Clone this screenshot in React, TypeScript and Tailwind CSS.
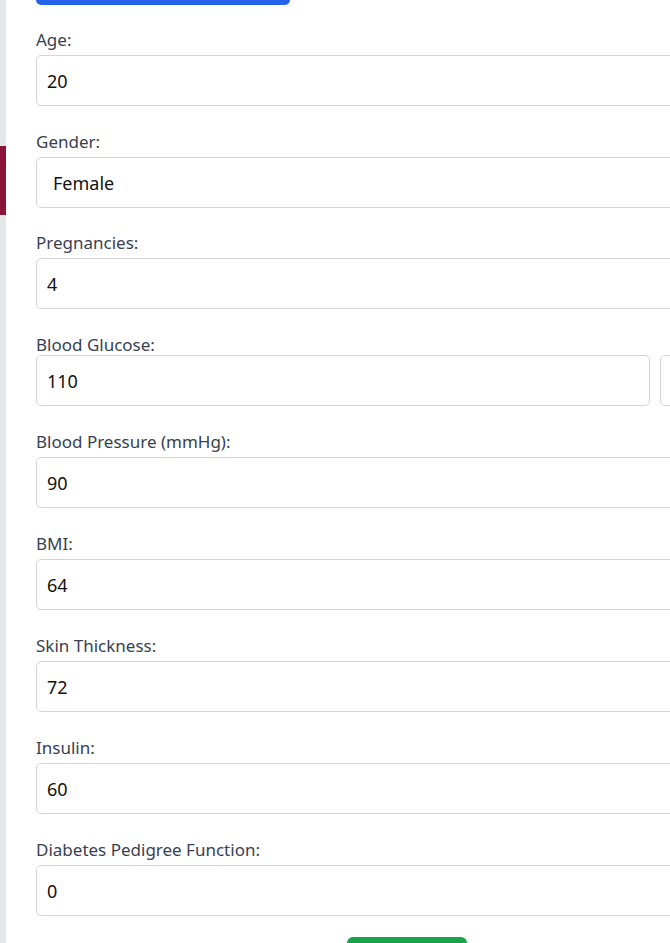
import React from "react";

const fields: { label: string; value: string; kind?: "select" | "split"; mb: string }[] = [
  { label: "Age:", value: "20", mb: "mb-[22px]" },
  { label: "Gender:", value: "Female", kind: "select", mb: "mb-[21px]" },
  { label: "Pregnancies:", value: "4", mb: "mb-[22px]" },
  { label: "Blood Glucose:", value: "110", kind: "split", mb: "mb-[22px]" },
  { label: "Blood Pressure (mmHg):", value: "90", mb: "mb-[22px]" },
  { label: "BMI:", value: "64", mb: "mb-[22px]" },
  { label: "Skin Thickness:", value: "72", mb: "mb-[22px]" },
  { label: "Insulin:", value: "60", mb: "mb-[22px]" },
  { label: "Diabetes Pedigree Function:", value: "0", mb: "mb-[21px]" },
];

export default function App() {
  return (
    <div
      className="w-[670px] h-[943px] overflow-hidden bg-white flex items-start"
      style={{ fontFamily: '"Noto Sans", "Open Sans", sans-serif' }}
    >
      <div className="w-[6px] h-[943px] shrink-0 bg-[#e5e7eb] flex flex-col">
        <div className="h-[146px] shrink-0" />
        <div className="h-[69px] shrink-0 bg-[#8b1538]" />
      </div>
      <div className="ml-[30px] w-[760px] shrink-0 flex flex-col">
        <div className="w-[254px] h-[5px] shrink-0 rounded-b-[6px] bg-[#2563eb] mb-[21px]" />
        {fields.map((f) => (
          <div key={f.label} className={`flex flex-col shrink-0 ${f.mb}`}>
            <label
              className={`h-[24px] pt-[2px] text-[17px] leading-[24px] text-[#374151] ${
                f.kind === "split" ? "mb-0" : "mb-[5px]"
              }`}
            >
              {f.label}
            </label>
            {f.kind === "split" ? (
              <div className="flex gap-[10px]">
                <div className="w-[614px] h-[51px] rounded-[5px] border border-[#d1d5db] flex items-center px-[10px] pt-[2px] text-[18px] text-[#111]">
                  {f.value}
                </div>
                <div className="w-[120px] h-[51px] rounded-[5px] border border-[#d1d5db]" />
              </div>
            ) : (
              <div
                className={`h-[51px] rounded-[5px] border border-[#d1d5db] flex items-center pt-[2px] text-[18px] text-[#111] ${
                  f.kind === "select" ? "px-[16px]" : "px-[10px]"
                }`}
              >
                {f.value}
              </div>
            )}
          </div>
        ))}
        <div className="ml-[311px] w-[120px] h-[40px] shrink-0 rounded-[6px] bg-[#16a34a]" />
      </div>
    </div>
  );
}
